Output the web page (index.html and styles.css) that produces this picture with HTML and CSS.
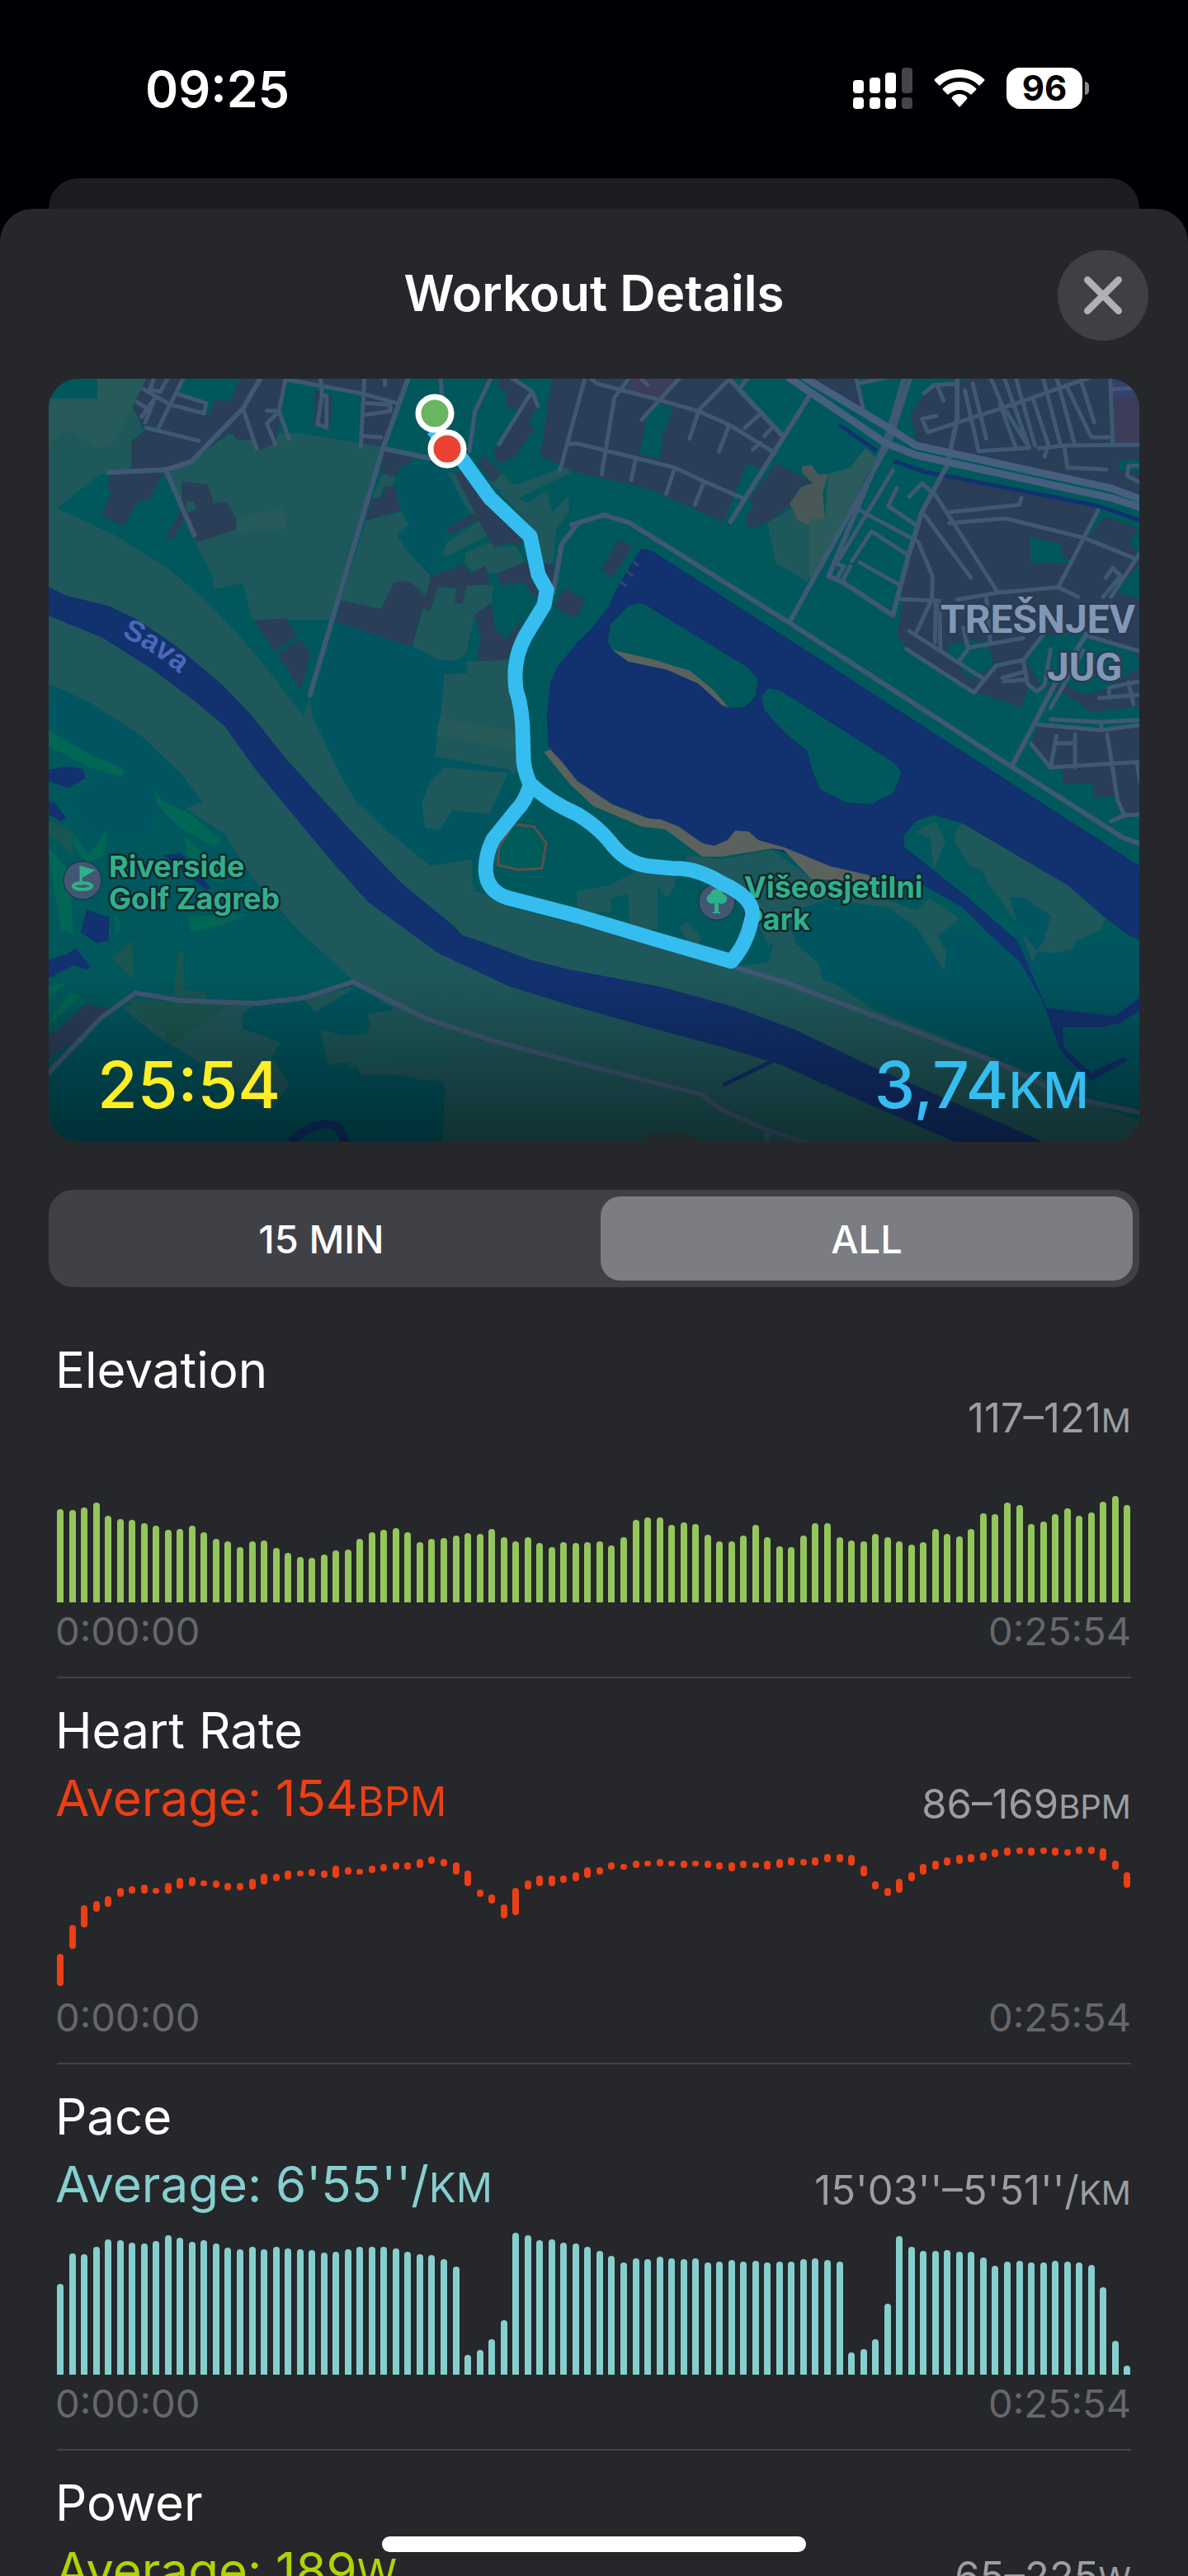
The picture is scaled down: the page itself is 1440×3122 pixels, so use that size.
FILE: index.html
```html
<!DOCTYPE html>
<html lang="en">
<head>
<meta charset="utf-8">
<meta name="viewport" content="width=device-width, initial-scale=1">
<title>Workout Details</title>
<link rel="stylesheet" href="styles.css">
<script src="charts.js" defer></script>
</head>
<body>
<div class="screen">
  <header class="status">
    <time class="clock">09:25</time>
    <div class="indicators">
      <svg class="signal" viewBox="0 0 72 50" aria-label="Signal">
        <g fill="#fff"><rect x="0" y="15" width="13" height="16" rx="4"/><rect x="20" y="12" width="13" height="19" rx="4"/><rect x="39" y="6" width="13" height="25" rx="4"/><rect x="0" y="36" width="13" height="14" rx="4"/><rect x="20" y="36" width="13" height="14" rx="4"/><rect x="39" y="36" width="13" height="14" rx="4"/></g>
        <g fill="#454547"><rect x="59" y="0" width="13" height="31" rx="4"/><rect x="59" y="36" width="13" height="14" rx="4"/></g>
      </svg>
      <svg class="wifi" viewBox="0 0 62 46" aria-label="Wi-Fi" fill="#fff">
        <path d="M31 0C43 0 54 5 61 12Q62 13 61 14L56 19Q55 20 54 19C48 13 40 10 31 10S14 13 8 19Q7 20 6 19L1 14Q0 13 1 12C8 5 19 0 31 0Z"/>
        <path d="M31 15C39 15 46 18 51 23Q52 24 51 25L46 30Q45 31 44 30C40 27 36 25 31 25S22 27 18 30Q17 31 16 30L11 25Q10 24 11 23C16 18 23 15 31 15Z"/>
        <path d="M31 30C35 30 38 31 40 34Q41 35 40 36L32 45Q31 46 30 45L22 36Q21 35 22 34C24 31 27 30 31 30Z"/>
      </svg>
      <div class="battery"><span class="battery-level">96</span><i class="battery-cap"></i></div>
    </div>
  </header>

  <div class="sheet-behind"></div>
  <main class="sheet">
    <div class="titlebar">
      <h1>Workout Details</h1>
      <button class="close" type="button" aria-label="Close">
        <svg viewBox="0 0 44 44"><path d="M4 4L40 40M40 4L4 40" stroke="#b0b0b9" stroke-width="8" stroke-linecap="round"/></svg>
      </button>
    </div>

    <div class="map">
      <svg class="map-art" viewBox="0 0 1322 925" preserveAspectRatio="xMidYMid slice" role="img" aria-label="Route map">
        <rect width="1322" height="925" fill="#00585c"/>
        <!-- western half: land -->
        <g transform="translate(-19 -19) scale(.446429 .333333)">
          <g fill="#1f585b">
            <path d="M40 130L175 130 175 50 310 50 272 160 300 245 267 285 267 390 180 405 65 527 220 625 370 750 470 865 560 990 640 1120 735 1287 750 1220 760 1290 835 1500 875 1590 960 1700 1080 1828 1190 1805 1195 1920 1230 1930 1290 1975 1600 2090 1600 2900 1110 2900 1118 2620 1090 2605 1000 2622 985 2590 890 2590 870 2540 800 2550 775 2450 780 2420 810 2410 840 2445 905 2440 915 2400 905 2370 980 2350 935 2310 865 2240 720 2060 600 1880 520 1710 415 1620 460 1595 400 1490 290 1350 150 1230 40 1165Z"/>
            <path d="M240 2340L600 2330 568 2370 570 2420 625 2425 672 2470 648 2525 688 2540 680 2590 697 2620 680 2700 645 2725 600 2700 540 2620 400 2520 330 2440Z"/>
            <path d="M735 2308L868 2270 850 2300 765 2360Z"/>
            <path d="M365 400L430 360 530 260 720 255 860 285 950 305 900 560 835 860 810 932 595 932 570 800 492 822 487 770 440 650Z"/>
            <path d="M905 572L1000 540 1020 590 988 628 1020 690 1045 700 1080 775 1070 850 1020 795 980 797 945 895 835 862Z"/>
            <path d="M1100 812L1150 820 1145 870 1165 875 1178 808 1250 808 1245 870 1200 915 1175 1060 1135 1090 1095 1075 1030 1030 1058 895 1078 900Z"/>
            <path d="M1117 1130L1180 1127 1175 1085 1290 1078 1300 1200 1325 1490 1290 1490 1240 1640 1140 1625 1100 1700 1065 1690 1055 1600 1075 1530 1118 1470 1090 1430 1105 1300Z"/>
            <path d="M1240 430L1275 400 1305 445 1450 375 1460 400 1320 490 1340 510 1395 465 1410 545 1455 480 1455 545 1420 600 1412 730 1375 730 1370 620Z"/>
            <path d="M1125 650L1215 570 1237 625 1125 705 1112 690ZM1175 690L1245 645 1255 670 1310 665 1335 725 1260 765 1190 755 1173 730ZM1110 395L1150 400 1203 545 1190 550 1130 450ZM950 400L985 415 975 450 950 455 940 495 920 490ZM1475 1950L1500 1915 1568 1900 1568 2000 1530 1990Z"/>
          </g>
          <g fill="#005560">
            <path d="M40 1170L150 1235 290 1355 400 1490 460 1595 415 1620 330 1640 300 1720 150 1700 100 1600 190 1490 40 1330Z"/>
            <path d="M1118 1470L1090 1430 1300 1480 1280 1520 1310 1560 1240 1750 1210 1840 1190 1805 1080 1828 960 1700 875 1590 820 1450 760 1260 820 940 1030 1035 1095 1075 1175 1090 1180 1127 1117 1130 1105 1300 1090 1430 1118 1470 1075 1530 1055 1600 1065 1690 1100 1700 1140 1625 1240 1640 1290 1490Z"/>
            <path d="M40 2590L240 2345 330 2440 540 2620 645 2725 697 2620 648 2525 672 2470 570 2420 568 2370 610 2335 735 2320 765 2360 865 2280 980 2350 905 2370 915 2400 840 2445 780 2420 800 2550 890 2590 985 2590 1118 2620 1110 2900 40 2900Z"/>
            <path d="M1000 370L1110 360 1190 560 1120 610 1080 775 1020 690 988 628 1020 590 985 440Z"/>
          </g>
          <path d="M850 2560L950 2420 1030 2430 1130 2480 1120 2540 880 2560Z" fill="#1b5a5a"/>
          <g fill="#265b5a">
            <path d="M553 562L678 528 690 600 552 618ZM1105 1290L1310 1340 1310 1405 1095 1355Z"/>
            <path d="M175 50L310 50 272 160 210 305 170 310 95 245 40 295 40 130 175 130Z"/>
          </g>
          <g fill="#1a5650">
            <path d="M255 2310L530 2335 450 2415 412 2425 412 2468 358 2468 358 2425 300 2390ZM215 2165L270 2095 272 2240ZM395 2140L408 2140 412 2280 468 2285 468 2315 380 2310ZM40 1660L105 1700 110 1790 40 1710Z"/>
          </g>
          <g fill="#006655">
            <path d="M40 1330L150 1420 250 1480 240 1505 150 1470 40 1390ZM325 1545L350 1590 430 1640 510 1735 495 1760 400 1690 340 1610ZM420 2015L540 2000 590 2005 520 2040 430 2070ZM40 1760L100 1850 110 2080 75 2060ZM105 1700L150 1790 205 1690 190 1790 150 1815 115 1770ZM40 2270L95 2250 40 2310ZM40 2400L100 2290 132 2300 40 2410ZM220 2000L240 2040 225 2080ZM410 1715L505 1840 520 1880 500 1890 420 1790Z"/>
          </g>
          <g fill="#2a3e58">
            <path d="M310 50L690 50 660 290 615 318 600 280 555 280 535 250 430 360 360 395 267 385 267 285 305 245 270 160ZM690 50L1020 50 950 305 890 292 895 115ZM765 95L813 120 805 235 762 230Z"/>
            <path d="M210 400L355 400 315 495 290 495 245 593 187 555 213 470 203 460ZM403 430L475 442 490 510 527 503 553 570 550 605 445 652 405 540ZM400 540L415 560 378 645 362 632ZM955 315L1040 350 998 378 985 415 942 400ZM955 450L982 448 1000 535 903 572 920 490 945 492Z"/>
            <path d="M838 865L945 895 980 797 1022 793 1068 850 1078 777 1170 730 1188 765 1230 735 1240 805 1178 808 1165 877 1145 870 1152 820 1098 812 1078 900 1058 895 1028 1032 890 970 820 940Z"/>
            <path d="M600 935L688 928 717 992 655 1047ZM663 1060L725 1005 758 1068 742 1080 745 1110 725 1185ZM1145 400L1180 370 1330 640 1320 665 1290 650 1253 672 1240 645 1210 570 1130 625 1125 600 1200 545ZM1205 365L1225 335 1272 400 1250 435ZM1260 765L1330 725 1415 732 1410 830 1365 850 1330 797 1270 808ZM1245 870L1255 980 1268 975 1282 1008 1330 930 1290 1075 1250 1085 1205 1080 1215 990 1200 915ZM1443 817L1500 862 1472 928 1412 885ZM1265 50L1300 50 1355 100 1372 155 1345 215 1360 240 1310 340 1265 365 1250 320 1320 180 1280 150 1290 110 1262 90Z"/>
            <path d="M40 2450L145 2330 210 2350 120 2460 40 2530Z"/>
          </g>
          <path d="M415 50L562 50 535 140 495 130 478 190 465 140 390 110Z" fill="#00585c"/>
          <path d="M415 505L435 503 445 530 418 545Z" fill="#1f585b"/>
          <g fill="#12316f">
            <path d="M40 813L90 845 205 883 280 930 385 1025 510 1165 590 1275 640 1360 688 1440 870 1710 1000 1890 1145 2050 1165 2080 1200 2095 1350 2170 1500 2220 1500 2352 1290 2265 1100 2145 910 1960 810 1810 600 1470 520 1320 440 1230 320 1110 190 1000 40 917Z"/>
            <path d="M40 1480L90 1467 135 1475 143 1510 95 1545 40 1520ZM40 1590L60 1600 90 1655 75 1665 40 1640ZM145 1988L207 2015 205 2100 175 2110 130 2070ZM40 2170L90 2150 115 2128 155 2190 145 2205 110 2190 50 2232 40 2232ZM355 1790L400 1780 450 1850 482 1910 470 1915 400 1840Z"/>
          </g>
          <path d="M1305 1677L1360 1685 1393 1745 1382 1838 1315 1842 1262 1825 1265 1760Z" fill="#005c58" stroke="#5c4f4c" stroke-width="3" vector-effect="non-scaling-stroke"/>
          <path d="M700 2830Q780 2740 830 2780L850 2840" class="canal wide"/>
          <path class="road thin" d="M635 173L668 175 635 220 658 295M685 62L668 175 695 275M570 165L607 310M900 50L890 305M890 265L945 270M900 145L970 152 970 175 900 188M780 50L785 115 797 120 797 235 772 222 785 115M300 95L370 150 465 183 470 145 390 112M410 50L340 237M307 235L450 283M330 50L318 95 345 105 368 50M305 215L330 130 295 195M283 142L310 165M1107 50L1110 115M1245 50L1200 175 1185 320M1295 50L1355 103 1265 295M1355 103L1370 155M955 57L955 80M690 60L890 110 995 148"/>
          <path class="road" d="M200 398L360 388 430 358 570 165 620 50M360 388L440 632M1020 50L950 310 750 1215M955 312L1110 355M1500 572L1480 582 1435 660 1412 840M40 2584L185 2380 278 2290 400 2318 610 2328 735 2308 868 2250 1070 2385 1250 2465 1500 2552"/>
        </g>
        <!-- eastern half: lake and city -->
        <g transform="translate(641 -19) scale(.471933 .333333)">
          <path d="M620 1960L1130 2110 1443 2100 1450 2900 1300 2680 628 2240 540 2060Z" fill="#005560"/>
          <g fill="#1f585b">
            <path d="M-20 1995L400 2195 490 2180 510 2080 550 2060 560 2110 620 2185 628 2240 660 2255 760 2350 900 2430 1180 2590 1300 2680 1450 2760 1450 2850 -20 2900Z"/>
            <path d="M487 580L550 530 597 590 597 770 590 795 510 728Z"/>
            <path d="M280 1790L370 1805 500 1770 600 1875 780 1945 870 1990 905 1945 980 2020 925 2085 947 2140 943 2210 925 2170 870 2050 800 1980 640 1950 560 1990 540 2060 490 2120 450 2000 400 1900 280 1840Z"/>
            <path d="M0 1920L80 1900 150 1850 250 1860 250 1900 230 1945 205 1900 205 2060 135 2060 130 1930 60 1960 50 2000 0 1980ZM262 2050L280 2032 315 2080 315 2120 290 2120Z"/>
          </g>
          <g fill="#2a3e58">
            <path d="M-66 50L385 50 530 270 375 578 180 455 0 398 -95 340ZM512 362L605 437 570 450 545 520 487 580 443 602 430 570 450 520 440 495ZM600 50L715 50 735 175Z"/>
            <path d="M890 110L915 80 975 70 1020 50 1450 50 1450 500 1370 450 1130 375 870 290 855 190Z"/>
            <path d="M940 400L1340 530 1450 580 1450 1248 1320 1270 1250 1200 1190 1180 1160 1170 1140 1253 1020 1195 845 1035 820 990 835 870 830 800 885 535Z"/>
            <path d="M1183 1320L1345 1340 1450 1315 1450 1640 1405 1645 1385 1575 1325 1577 1325 1530 1247 1530 1245 1475 1215 1470 1165 1385ZM108 640L140 668 92 780 62 750ZM0 845L20 862 0 905Z"/>
          </g>
          <g fill="#00585c">
            <path d="M180 170L205 150 243 155 230 235 220 240 212 350 160 330ZM435 367L475 385 385 580 378 570ZM425 50L400 95 530 270 620 125 540 50Z"/>
            <path d="M1163 633L1243 658 1243 700 1265 718 1262 727 1163 727ZM1337 530L1450 570 1450 705 1425 700 1310 625ZM955 1020L1050 1010 1068 1090 1060 1110 1010 1150 950 1060ZM1450 720L1450 860 1385 830ZM1200 990L1300 980 1430 1050 1450 1100 1350 1190 1305 1205 1250 1170 1190 1170 1150 1080ZM1392 353L1450 350 1450 395 1392 388Z"/>
          </g>
          <path d="M1355 558L1440 600 1418 655 1440 680 1430 705 1315 625Z" fill="#2a3e58"/>
          <path d="M150 50L265 50 210 130 120 95ZM1378 120L1450 120 1450 290 1378 290Z" fill="#3b3d59"/>
          <path d="M1370 50L1450 50 1450 125 1370 125Z" fill="#373f6e"/>
          <path d="M740 310L768 345 600 790 595 770 597 568 635 560 645 403 700 380Z" fill="#2b5b5a"/>
          <path d="M577 375L600 370 618 405 645 403 630 470 635 565 597 568 597 590 565 570 545 510 575 450 605 437 577 400Z" fill="#495857"/>
          <path fill="#12316f" d="M160 680L175 675 200 690 1450 1834 1450 2105 1410 2075 1350 2010 1260 1900 985 1672 915 1643 870 1665 838 1720 840 1760 1000 1940 1130 2100 1205 2345 1380 2375 1450 2300 1450 2345 1395 2400 1345 2415 1245 2415 1250 2490 1320 2580 1400 2525 1415 2535 1320 2610 1280 2560 1240 2500 1195 2320 1135 2175 1060 2080 990 1980 890 1900 750 1865 640 1830 530 1780 440 1730 345 1760 200 1665 80 1600 0 1525 -50 1440 -75 1390 -79 1280 -70 1160 -50 1100 0 1015 40 960 80 885 100 820Z"/>
          <path fill="#5b625e" d="M-86 1415L-70 1405 -40 1450 0 1520 90 1605 180 1655 215 1660 260 1685 320 1745 350 1755 385 1735 405 1700 440 1703 465 1735 530 1760 650 1830 750 1862 780 1890 600 1875 530 1770 500 1765 370 1795 320 1795 225 1695 165 1685 40 1610 -20 1530Z"/>
          <path fill="#00585c" d="M155 873L175 880 440 1110 463 1150 458 1210 430 1250 385 1253 330 1180 230 1115 130 1085 90 1045 78 1010 85 950 130 885ZM490 1183L520 1190 820 1460 832 1490 810 1565 770 1590 760 1603 690 1598 625 1550 605 1490 590 1410 530 1340 480 1260 473 1215Z"/>
          <path fill="#5b625e" d="M90 1043L200 1080 290 1120 350 1190 387 1252 372 1245 310 1165 230 1115 130 1085Z"/>
          <path stroke="#35486a" stroke-width="3" vector-effect="non-scaling-stroke" d="M143 722L157 738M127 758L142 774M110 795L127 812"/>
          <path fill="#1f585b" d="M975 1690L990 1675 1260 1900 1355 2020 1345 2060 1280 2100 1270 2130 1225 2145 1180 2140 1167 2180 1140 2060 1090 1960 1055 1890 1035 1840 1010 1830 968 1740ZM865 1705L920 1665 945 1740 915 1840 905 1725Z"/>
          <path fill="#005560" d="M1110 1940L1150 1945 1215 2010 1200 2090 1180 2140 1130 2050Z"/>
          <path fill="#12316f" d="M-20 2205L0 2210 220 2270 400 2340 560 2425 760 2560 1050 2740 1225 2850 1000 2850 740 2690 520 2550 380 2490 170 2410 0 2342 -20 2336Z"/>
          <path fill="#3b4a45" d="M160 2840L180 2800 220 2805 260 2793 325 2840Z"/>
          <path class="canal" d="M375 2625L540 2510M672 225L768 318M812 357L890 395 1340 520 1450 575"/>
          <path class="road thin" d="M20 50L-45 390M-25 293L0 293 150 345 250 380 325 430 430 495M150 345L138 425M250 380L228 475M325 430L302 515M135 50L95 125 62 405M30 50L50 75 200 130 310 175 390 225 505 325M385 65L312 170 288 275M390 225L363 322M265 50L165 205M440 50L415 95M465 190L430 235M500 235L480 265M470 290L450 315M165 60L180 80M715 50L735 175M720 75L800 50M890 110L915 80 975 75M925 85L940 137M922 192L885 203 900 252 1130 145 1320 50M995 100L1030 320 1160 308 1090 150 1060 50M1015 75L1050 275M1085 150L1125 305M1095 50L1160 308M1125 50L1175 300M1170 130L1210 300M1195 50L1240 295M1230 50L1277 295M1290 50L1327 215M1255 80L1320 270 1375 270M1368 50L1375 295M1185 310L1250 300 1450 297M1250 300L1258 380 1358 387M1368 95L1450 90M1205 315L1200 340M1450 370L1415 375 1412 410 1450 438"/>
          <path class="road thin" d="M915 470L1078 830M950 543L1135 515 1140 490M955 582L1100 565 1300 635 1430 710M1337 535L1235 815M885 540L1010 780M725 535L875 650 912 775 910 860 870 980M830 858L930 865M1450 680L1370 850M1235 815L1080 835 975 860M1235 815L1285 850M845 695L755 612 705 720M725 725L825 805M810 390L665 730 685 740 665 785M820 455L798 520 870 590M852 485L885 437 915 475M700 740L682 790M852 975L1040 1145M845 1040L1018 1198 1075 1100 1145 1080 1195 990M930 880L932 1045M920 870L918 1015M980 1085L1005 1035 1145 1000M990 960L1003 1035M1050 850L1060 1010M1145 1080L1155 1165 1180 1195 1200 1170 1215 1040M1305 990L1450 1050M1215 1255L1300 1045M1092 1145L1150 1120M1095 1158L1155 1150M1357 780L1375 745 1395 775 1350 850M1215 1295L1345 1305 1450 1297M1183 1315L1345 1335 1450 1315M1345 1305L1345 1335M1165 1385L1215 1470 1450 1450M1230 1355L1215 1470M1278 1350L1278 1470M1228 1382L1278 1382M1360 1350L1372 1450 1387 1590 1405 1645 1370 1665M1405 1645L1450 1640M1437 1455L1445 1520M1340 1218L1450 1205M1365 1215L1365 1180 1450 1155M1415 1160L1428 1240"/>
          <path class="road" d="M855 50L800 290 545 940M840 50L790 290 645 775 685 800 810 917 850 700 885 540 950 370 975 205 975 50M600 110L390 583M385 50L530 270M-20 590L0 582 68 552 135 582 545 945 1115 1468 1400 1725 1450 1750M1115 1468L1225 1170 1310 980M400 2195L540 2255 1090 2550 1250 2665 1450 2727M-20 2538L320 2660 365 2712 490 2790 600 2840M490 2790L485 2840"/>
          <path class="road highway" d="M540 50L790 290 870 335 1370 490 1450 527M580 50L810 245 870 300 1370 455 1450 497"/>
        </g>
        <circle cx="41" cy="608" r="23" class="poi"/>
        <path d="M39 592V614M39 592L53 596 39 604Z" fill="#30b08a" stroke="#30b08a" stroke-width="3"/>
        <ellipse cx="41" cy="615" rx="11" ry="4" fill="none" stroke="#30b08a" stroke-width="4"/>
        <circle cx="810" cy="634" r="22" class="poi"/>
        <path d="M799 634C795 629 800 624 802 625 803 617 815 616 818 625 822 625 824 632 820 635Q815 638 812 635V646H814V648H805V646H807V635Q803 638 799 634Z" fill="#30b08a"/>
        <g class="labels">
          <text x="73" y="604">Riverside</text>
          <text x="73" y="643">Golf Zagreb</text>
          <text x="843" y="629">Višeosjetilni</text>
          <text x="843" y="668">Park</text>
        </g>
        <path id="river-line" d="M88 312Q135 332 190 386" fill="none"/>
        <text class="river-label"><textPath href="#river-line">Sava</textPath></text>
        <g class="district">
          <text x="1081" y="308">TREŠNJEV</text>
          <text x="1210" y="366">JUG</text>
        </g>
        <g transform="translate(-19 -19) scale(.446429 .333333)">
          <path class="route" d="M1085 240L1165 350 1240 490 1350 630 1372 770 1395 825 1388 880 1338 990Q1300 1080 1312 1190Q1330 1260 1330 1360L1332 1450Q1338 1500 1350 1530 1400 1595 1478 1640 1540 1690 1578 1760 1620 1825 1680 1830L1742 1838Q1800 1835 1869 1890 1960 1945 1953 2010 1940 2110 1896 2175L1690 2095 1478 2010 1290 1945Q1230 1920 1229 1840 1230 1780 1250 1730L1310 1630Q1340 1590 1350 1530"/>
        </g>
        <circle cx="468" cy="42" r="20" fill="#69b562" stroke="#fff" stroke-width="7"/>
        <circle cx="483" cy="85" r="20" fill="#ea4335" stroke="#fff" stroke-width="7"/>
      </svg>
      <div class="map-stats">
        <span class="duration">25:54</span>
        <span class="distance">3,74<small>KM</small></span>
      </div>
    </div>

    <div class="segments">
      <button class="segment" type="button" aria-pressed="false">15 MIN</button>
      <button class="segment selected" type="button" aria-pressed="true">ALL</button>
    </div>

    <section class="metric elevation">
      <div class="metric-head">
        <h2>Elevation</h2>
        <p class="range">117–121<small>M</small></p>
      </div>
      <div class="chart" data-series="elevation"></div>
      <div class="times"><span>0:00:00</span><span>0:25:54</span></div>
    </section>

    <section class="metric heart">
      <div class="metric-head">
        <div class="summary">
          <h2>Heart Rate</h2>
          <p class="average">Average: 154<small>BPM</small></p>
        </div>
        <p class="range">86–169<small>BPM</small></p>
      </div>
      <div class="chart" data-series="heart"></div>
      <div class="times"><span>0:00:00</span><span>0:25:54</span></div>
    </section>

    <section class="metric pace">
      <div class="metric-head">
        <div class="summary">
          <h2>Pace</h2>
          <p class="average">Average: 6'55''/<small>KM</small></p>
        </div>
        <p class="range">15'03''–5'51''/<small>KM</small></p>
      </div>
      <div class="chart" data-series="pace"></div>
      <div class="times"><span>0:00:00</span><span>0:25:54</span></div>
    </section>

    <section class="metric power">
      <div class="metric-head">
        <div class="summary">
          <h2>Power</h2>
          <p class="average">Average: 189<small>W</small></p>
        </div>
        <p class="range">65–225<small>W</small></p>
      </div>
    </section>
  </main>
  <div class="home-indicator"></div>
</div>
</body>
</html>
```
FILE: styles.css
```css
* { box-sizing: border-box; }

html, body { margin: 0; height: 100%; background: #000004; }

body { font-family: Inter, "Liberation Sans", sans-serif; color: #fff; }

h1, h2, p { margin: 0; font-weight: 400; }

button { border: 0; padding: 0; font: inherit; color: inherit; }

small { line-height: 0; }

.screen {
  position: relative;
  display: flex;
  flex-direction: column;
  height: 100vh;
  overflow: hidden;
}

.status {
  flex: none;
  display: flex;
  justify-content: space-between;
  height: 216px;
  padding: 72px 120px 0 176px;
}

.clock { font-size: 61px; line-height: 72px; font-weight: 600; }

.indicators { display: flex; align-items: center; gap: 26px; height: 70px; }
.signal { width: 72px; height: 50px; }
.wifi { width: 62px; height: 46px; }

.battery { display: flex; align-items: center; gap: 3px; }
.battery-level {
  width: 92px;
  height: 50px;
  border-radius: 16px;
  background: #fff;
  color: #000;
  font-size: 42px;
  line-height: 50px;
  font-weight: 700;
  text-align: center;
}
.battery-cap { width: 5px; height: 16px; border-radius: 0 5px 5px 0; background: #8a8a8c; }

.sheet-behind {
  flex: none;
  height: 37px;
  margin: 0 59px;
  border-radius: 36px 36px 0 0;
  background: #1c1d20;
}

.sheet {
  flex: 1;
  min-height: 0;
  overflow: hidden;
  border-radius: 40px 40px 0 0;
  background: #26272b;
}

.titlebar {
  display: grid;
  grid-template-columns: 110px 1fr 110px;
  align-items: center;
  padding: 50px 48px 46px;
}
.titlebar h1 {
  grid-column: 2;
  padding-bottom: 6px;
  font-size: 60px;
  line-height: 72px;
  font-weight: 600;
  text-align: center;
}

.close {
  display: grid;
  place-items: center;
  width: 110px;
  height: 110px;
  border-radius: 50%;
  background: #3f4044;
}
.close svg { width: 46px; height: 46px; }

.map {
  position: relative;
  margin: 0 59px;
  border-radius: 36px;
  overflow: hidden;
}
.map-art { display: block; width: 100%; aspect-ratio: 1322 / 925; }
.map::after {
  content: "";
  position: absolute;
  inset: 78% 0 0;
  background: linear-gradient(rgba(0, 0, 0, 0), rgba(0, 0, 0, .45));
}

.road {
  fill: none;
  stroke: #3f5873;
  stroke-width: 6px;
  stroke-linejoin: round;
  vector-effect: non-scaling-stroke;
}
.road.thin { stroke-width: 5px; stroke-linecap: round; }
.road.highway { stroke: #465f7e; stroke-width: 9px; }
.canal { fill: none; stroke: #12316f; stroke-width: 5px; vector-effect: non-scaling-stroke; }
.canal.wide { stroke-width: 10px; }
.route {
  fill: none;
  stroke: #35bdf0;
  stroke-width: 18px;
  stroke-linejoin: round;
  vector-effect: non-scaling-stroke;
}
.poi { fill: #425772; stroke: #1c2a3a; stroke-width: 1px; }

.labels { font-size: 36px; font-weight: 700; fill: #30b08a; }
.labels, .district { stroke: #13252e; stroke-width: 5px; stroke-linejoin: round; paint-order: stroke; }
.district { font-family: Roboto, sans-serif; font-size: 48px; font-weight: 700; fill: #8297b6; stroke: #2a3b52; }
.river-label { font-family: "Liberation Sans", sans-serif; font-size: 36px; font-weight: 700; fill: #4a68b8; }

.map-stats {
  position: absolute;
  z-index: 1;
  left: 0;
  right: 0;
  bottom: 30px;
  display: flex;
  justify-content: space-between;
  padding: 0 61px 0 59px;
  font-size: 79px;
  line-height: 80px;
  font-weight: 500;
}
.map-stats small { font-size: 61px; }
.duration { color: #feee26; }
.distance { color: #35bdf0; }

.segments {
  display: grid;
  grid-template-columns: 1fr 1fr;
  gap: 16px;
  margin: 58px 59px 37px;
  padding: 8px;
  border-radius: 30px;
  background: #404147;
}
.segment {
  height: 102px;
  border-radius: 24px;
  background: none;
  font-size: 47px;
  font-weight: 500;
}
.segment.selected { background: #7b7d83; }

.metric { margin: 0 69px; padding: 27px 0; border-bottom: 2px solid #424347; }
.metric-head { display: flex; justify-content: space-between; }
.elevation .metric-head { height: 123px; }
.summary { display: grid; gap: 10px; }
.metric h2, .average { font-size: 60px; line-height: 72px; }
.metric h2, .average, .times { margin-left: -2px; }
.average small { font-size: 49px; }
.range { align-self: flex-end; font-size: 49px; line-height: 56px; color: #9d9da3; }
.range small { font-size: 40px; }
.times {
  display: flex;
  justify-content: space-between;
  margin-top: 7px;
  font-size: 47px;
  line-height: 56px;
  color: #66676b;
}

.elevation { color: #94c65c; }
.heart { color: #ec3f15; }
.pace { color: #86cfcf; }
.power { color: #b3d300; border: 0; }
.metric h2 { color: #fff; }

.chart { display: flex; justify-content: space-between; align-items: flex-end; height: 195px; }
.bar { width: 8px; border-radius: 4px 4px 0 0; background: currentColor; }
.bar.floating { border-radius: 4px; }

.home-indicator {
  position: absolute;
  left: 50%;
  bottom: 29px;
  width: 514px;
  max-width: 60%;
  height: 19px;
  border-radius: 10px;
  background: #fff;
  transform: translateX(-50%);
}
```
FILE: charts.js
```js
// One sample per column; heart samples are [offset from the base, length].
const series = {
  elevation: [
    113,112,115,121,105,101,100,96,93,88,89,93,85,77,74,67,74,75,66,60,55,54,58,63,64,77,85,88,90,85,
    73,77,78,81,84,83,89,79,74,79,72,67,73,72,73,74,69,79,100,103,103,94,97,95,82,74,74,81,94,79,
    68,67,81,96,96,79,75,74,83,79,74,70,73,89,83,80,89,108,107,121,118,95,98,107,114,105,109,122,129,118
  ],
  heart: [
    [3,39],[48,29],[74,27],[93,13],[99,13],[111,11],[115,9],[115,11],[115,7],[115,13],
    [121,13],[124,11],[124,7],[122,9],[119,9],[119,9],[120,13],[126,13],[130,9],[132,11],
    [136,7],[136,9],[134,9],[134,15],[138,9],[138,7],[140,9],[142,9],[144,9],[144,9],
    [146,11],[151,9],[148,9],[138,15],[124,19],[111,9],[103,11],[85,17],[89,33],[120,11],
    [124,13],[124,13],[128,9],[130,11],[134,13],[138,9],[144,9],[144,7],[146,9],[148,7],
    [148,9],[148,7],[146,9],[148,7],[146,9],[144,9],[142,11],[146,9],[146,7],[144,11],
    [146,11],[149,10],[149,8],[149,10],[153,10],[153,10],[149,13],[136,13],[120,10],[112,10],
    [116,17],[130,11],[138,13],[144,11],[149,10],[151,11],[153,10],[155,10],[159,10],[161,10],
    [163,8],[161,10],[163,8],[161,10],[161,8],[163,9],[163,9],[155,15],[144,11],[122,19]
  ],
  pace: [
    110,147,146,155,164,163,160,159,162,169,166,161,163,159,154,152,155,152,155,153,152,151,148,149,152,155,155,155,153,149,
    146,145,140,131,24,30,43,66,172,169,163,164,160,159,155,150,144,136,141,140,143,141,140,141,136,137,139,137,138,136,
    137,137,140,141,139,137,27,31,43,86,168,155,150,150,151,149,149,142,132,137,138,136,136,138,137,136,133,106,41,11
  ]
};

document.querySelectorAll(".chart").forEach((chart) => {
  series[chart.dataset.series].forEach((sample) => {
    const bar = document.createElement("span");
    bar.className = "bar";
    if (Array.isArray(sample)) {
      bar.classList.add("floating");
      bar.style.marginBottom = sample[0] + "px";
      bar.style.height = sample[1] + "px";
    } else {
      bar.style.height = sample + "px";
    }
    chart.append(bar);
  });
});
```
